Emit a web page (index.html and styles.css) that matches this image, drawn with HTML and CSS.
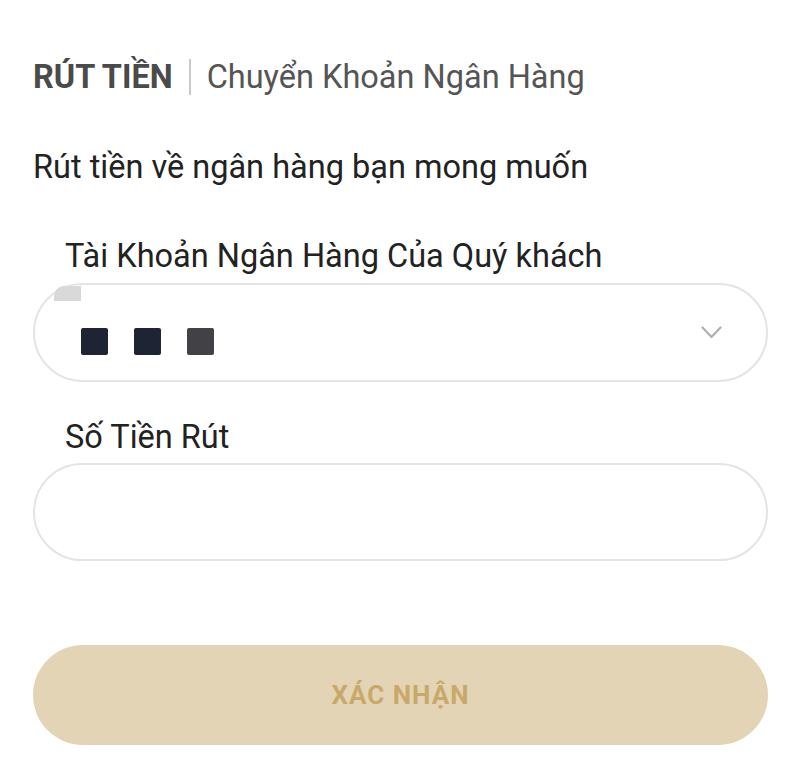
FILE: index.html
```html
<!DOCTYPE html>
<html lang="vi">
<head>
    <meta charset="UTF-8">
    <meta name="viewport" content="width=device-width, initial-scale=1.0">
    <title>Rút Tiền</title>
    <link rel="stylesheet" href="styles.css">
</head>
<body>
    <div class="withdraw">
        <h1 class="title">
            <span class="title-main">RÚT TIỀN</span>
            <span class="title-sep"></span>
            <span class="title-sub">Chuyển Khoản Ngân Hàng</span>
        </h1>

        <p class="intro">Rút tiền về ngân hàng bạn mong muốn</p>

        <div class="field">
            <label class="field-label">Tài Khoản Ngân Hàng Của Quý khách</label>
            <div class="select-box">
                <span class="select-tab"></span>
                <div class="masked">
                    <span class="dot"></span>
                    <span class="dot"></span>
                    <span class="dot dot-light"></span>
                </div>
                <svg class="chevron" width="21" height="13" viewBox="0 0 21 13">
                    <polyline points="1.5,1.5 10.5,11 19.5,1.5" fill="none" stroke="#b0b0b0" stroke-width="2.2" stroke-linecap="round" stroke-linejoin="round"/>
                </svg>
            </div>
        </div>

        <div class="field field-amount">
            <label class="field-label">Số Tiền Rút</label>
            <input class="amount-input" type="text">
        </div>

        <button class="confirm-btn" disabled>XÁC NHẬN</button>
    </div>
</body>
</html>
```

FILE: styles.css
```css
body {
    margin: 0;
    background-color: #fff;
    font-family: Roboto, "Noto Sans", Arial, sans-serif;
    color: #222;
}

.withdraw {
    display: flex;
    flex-direction: column;
    padding: 58px 32px 0 33px;
}

.title {
    display: flex;
    align-items: center;
    margin: 0;
    font-size: 32.5px;
    font-weight: normal;
    line-height: 38px;
}

.title-main {
    font-weight: bold;
    color: #4a4a4a;
}

.title-sep {
    width: 2px;
    height: 36px;
    margin: 0 16px 0 16px;
    background-color: #c9c9c9;
}

.title-sub {
    color: #555;
}

.intro {
    margin: 52px 0 0 0;
    font-size: 32.5px;
    line-height: 38px;
    color: #222;
}

.field {
    display: flex;
    flex-direction: column;
    margin-top: 51px;
}

.field-label {
    padding-left: 32px;
    font-size: 32.5px;
    line-height: 38px;
    color: #222;
}

.select-box {
    position: relative;
    display: flex;
    align-items: center;
    justify-content: space-between;
    height: 99px;
    box-sizing: border-box;
    margin-top: 8px;
    padding: 0 44px 0 46px;
    border: 2px solid #e4e4e4;
    border-radius: 50px;
}

.select-tab {
    position: absolute;
    left: 19px;
    top: 1px;
    width: 27px;
    height: 15px;
    background-color: #d9d9d9;
    border-top-left-radius: 10px;
}

.masked {
    display: flex;
    gap: 26px;
    margin-top: 18px;
}

.dot {
    width: 27px;
    height: 27px;
    background-color: #1f2435;
    border-radius: 2px;
}

.dot-light {
    background-color: #414146;
}

.field-amount {
    margin-top: 36px;
}

.amount-input {
    height: 98px;
    box-sizing: border-box;
    margin-top: 7px;
    padding: 0 40px;
    border: 2px solid #e4e4e4;
    border-radius: 50px;
    font-family: inherit;
    font-size: 28px;
    outline: none;
}

.confirm-btn {
    height: 100px;
    margin-top: 84px;
    border: none;
    border-radius: 50px;
    background-color: #e3d4b6;
    color: #c9a96a;
    font-family: inherit;
    font-size: 26px;
    font-weight: bold;
    letter-spacing: 1px;
}
```
